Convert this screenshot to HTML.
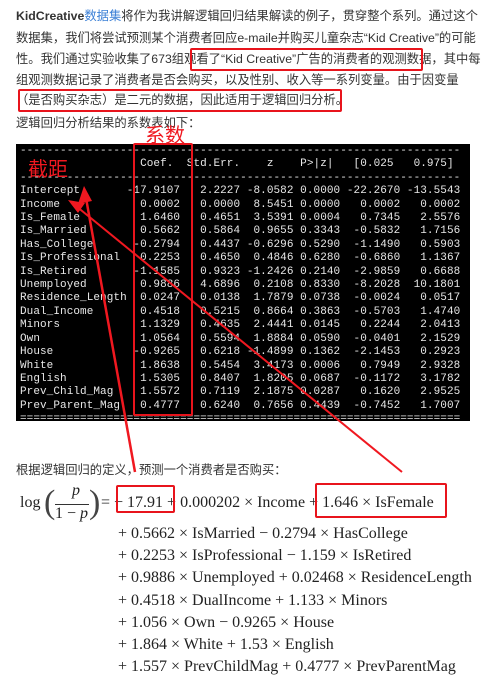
<!DOCTYPE html>
<html><head><meta charset="utf-8"><style>
body{margin:0;width:482px;height:691px;background:#fff;position:relative;overflow:hidden;font-family:"Liberation Sans","Noto Sans CJK SC",sans-serif;color:#333}
.t{position:absolute;left:16px;font-size:12.3px;line-height:22px;width:460px;white-space:nowrap}
.blk{position:absolute;left:16px;top:144px;width:454px;height:277px;background:#000}
pre{position:absolute;left:20px;top:145px;margin:0;font-family:"Liberation Mono",monospace;font-size:11px;letter-spacing:0.07px;line-height:13.4px;color:#e8e8e8}
.r{position:absolute;border:2px solid #e8141c;border-radius:2px}
.red{position:absolute;color:#f01820;font-size:20px;font-family:"Noto Sans CJK SC",sans-serif;line-height:20px}
.eq{position:absolute;font-family:"Liberation Serif",serif;font-size:16px;color:#222;white-space:nowrap}
</style></head><body>
<div class="t" style="top:5px"><b>KidCreative</b><span style="color:#3a7fd6">数据集</span>将作为我讲解逻辑回归结果解读的例子，贯穿整个系列。通过这个</div>
<div class="t" style="top:27px">数据集，我们将尝试预测某个消费者回应e-maile并购买儿童杂志“Kid Creative”的可能</div>
<div class="t" style="top:48px">性。我们通过实验收集了673组观看了“Kid Creative”广告的消费者的观测数据，其中每</div>
<div class="t" style="top:69px">组观测数据记录了消费者是否会购买，以及性别、收入等一系列变量。由于因变量</div>
<div class="t" style="top:89px">（是否购买杂志）是二元的数据，因此适用于逻辑回归分析。</div>
<div class="t" style="top:112px">逻辑回归分析结果的系数表如下：</div>
<div class="r" style="left:190px;top:48px;width:229px;height:19px"></div>
<div class="r" style="left:18px;top:89px;width:320px;height:19px"></div>
<div class="blk"></div>
<pre>------------------------------------------------------------------
                  Coef.  Std.Err.    z    P>|z|   [0.025   0.975]
------------------------------------------------------------------
Intercept       -17.9107   2.2227 -8.0582 0.0000 -22.2670 -13.5543
Income            0.0002   0.0000  8.5451 0.0000   0.0002   0.0002
Is_Female         1.6460   0.4651  3.5391 0.0004   0.7345   2.5576
Is_Married        0.5662   0.5864  0.9655 0.3343  -0.5832   1.7156
Has_College      -0.2794   0.4437 -0.6296 0.5290  -1.1490   0.5903
Is_Professional   0.2253   0.4650  0.4846 0.6280  -0.6860   1.1367
Is_Retired       -1.1585   0.9323 -1.2426 0.2140  -2.9859   0.6688
Unemployed        0.9886   4.6896  0.2108 0.8330  -8.2028  10.1801
Residence_Length  0.0247   0.0138  1.7879 0.0738  -0.0024   0.0517
Dual_Income       0.4518   0.5215  0.8664 0.3863  -0.5703   1.4740
Minors            1.1329   0.4635  2.4441 0.0145   0.2244   2.0413
Own               1.0564   0.5594  1.8884 0.0590  -0.0401   2.1529
House            -0.9265   0.6218 -1.4899 0.1362  -2.1453   0.2923
White             1.8638   0.5454  3.4173 0.0006   0.7949   2.9328
English           1.5305   0.8407  1.8205 0.0687  -0.1172   3.1782
Prev_Child_Mag    1.5572   0.7119  2.1875 0.0287   0.1620   2.9525
Prev_Parent_Mag   0.4777   0.6240  0.7656 0.4439  -0.7452   1.7007
==================================================================</pre>
<div class="r" style="left:133px;top:143px;width:56px;height:269px"></div>
<div class="red" style="left:145px;top:124px">系数</div>
<div class="red" style="left:28px;top:158px">截距</div>
<svg style="position:absolute;left:0;top:0" width="482" height="691">
<g stroke="#f01820" stroke-width="2.5" fill="#f01820">
<line x1="135" y1="472" x2="86" y2="198"/>
<polygon points="84,186 78,204 92,201" stroke="none"/>
<line x1="402" y1="472" x2="76" y2="206" stroke-width="2"/>
<polygon points="68,200 78,213 85,203" stroke="none"/>
</g></svg>
<div class="t" style="top:459px">根据逻辑回归的定义，预测一个消费者是否购买：</div>
<div class="eq" style="left:20px;top:494px">log</div>
<div class="eq" style="left:44px;top:484px;font-size:34px;font-weight:100;color:#444">(</div>
<div class="eq" style="left:64px;top:482px;width:24px;text-align:center;font-style:italic">p</div>
<div style="position:absolute;left:55px;top:504px;width:34px;border-top:1px solid #333"></div>
<div class="eq" style="left:55px;top:505px;font-size:16px">1 − <i>p</i></div>
<div class="eq" style="left:89px;top:484px;font-size:34px;color:#444">)</div>
<div class="eq" style="left:101px;top:494px">= − 17.91 + 0.000202 × Income + 1.646 × IsFemale</div>
<div class="r" style="left:116px;top:485px;width:55px;height:24px"></div>
<div class="r" style="left:315px;top:483px;width:128px;height:31px"></div>
<div class="eq" style="left:118px;top:523px;line-height:22.2px">+ 0.5662 × IsMarried − 0.2794 × HasCollege<br>+ 0.2253 × IsProfessional − 1.159 × IsRetired<br>+ 0.9886 × Unemployed + 0.02468 × ResidenceLength<br>+ 0.4518 × DualIncome + 1.133 × Minors<br>+ 1.056 × Own − 0.9265 × House<br>+ 1.864 × White + 1.53 × English<br>+ 1.557 × PrevChildMag + 0.4777 × PrevParentMag</div>
</body></html>
